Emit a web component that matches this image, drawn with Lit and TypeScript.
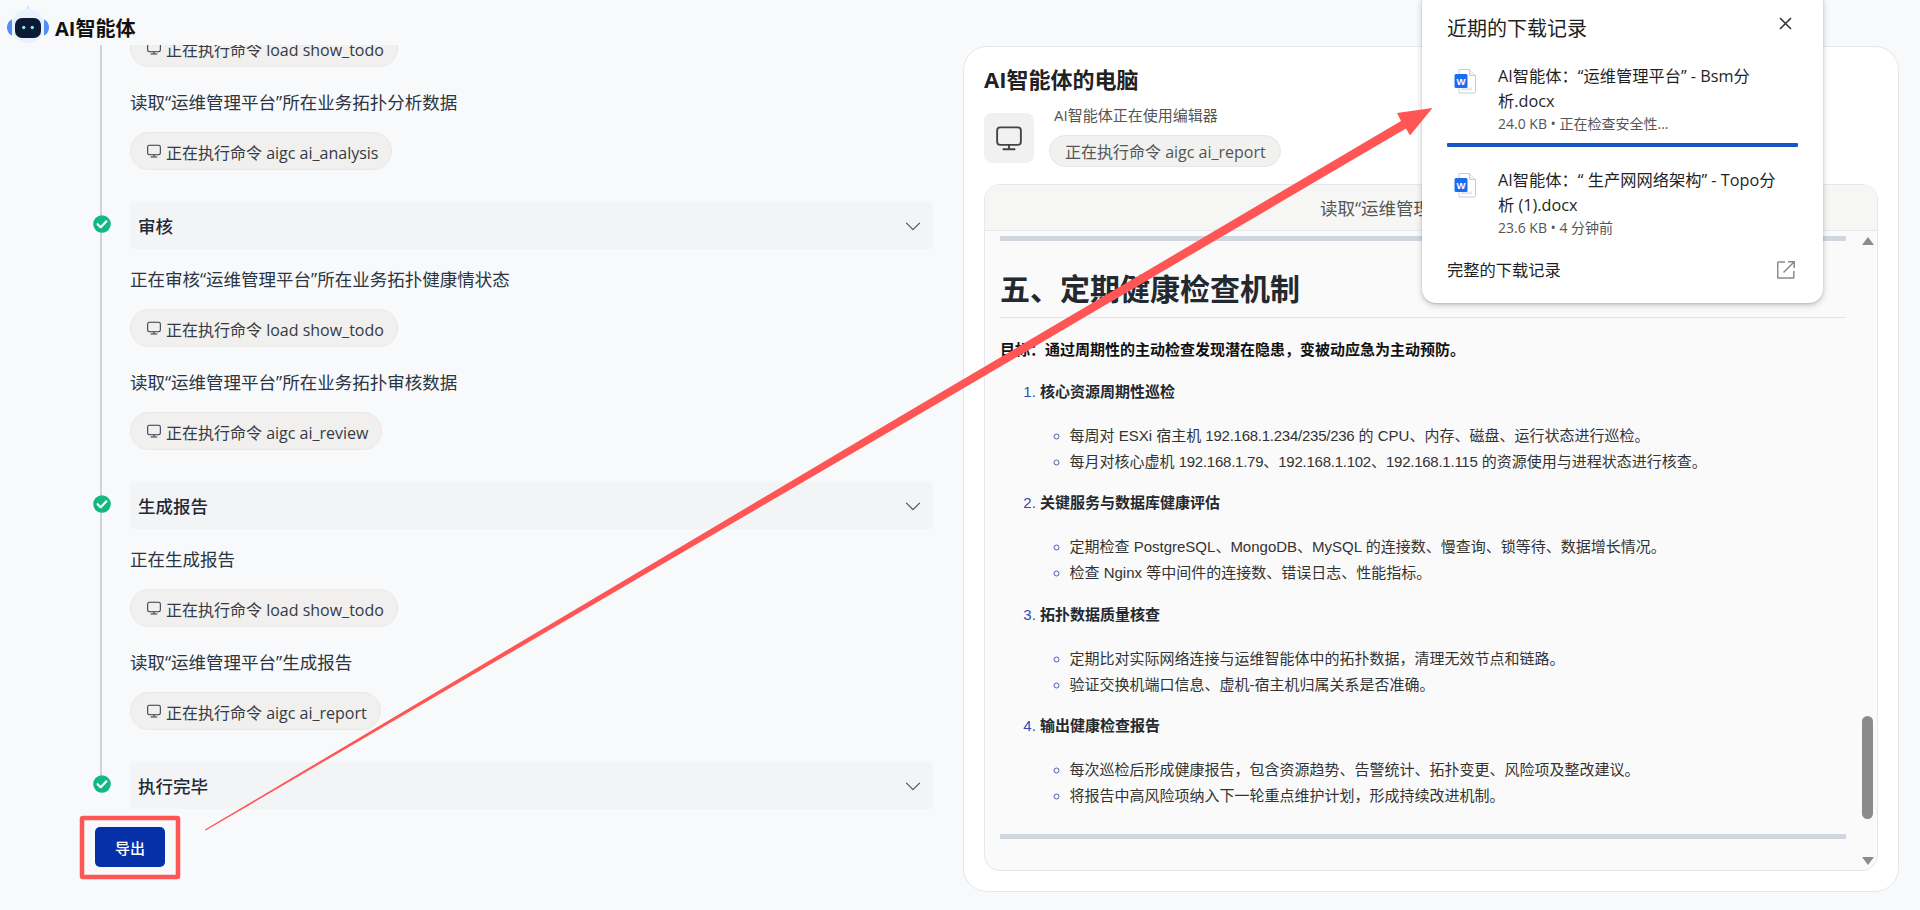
import { LitElement, html, css, svg } from "lit";
import { customElement } from "lit/decorators.js";

const monitor = (size: number, sw: number) => html`<svg class="mon" width=${size} height=${size} viewBox="0 0 24 24" fill="none" stroke="currentColor" stroke-width=${sw} stroke-linecap="round" stroke-linejoin="round"><rect x="2.5" y="3.5" width="19" height="14" rx="2.5"/><path d="M12 17.5V21M7.5 21h9"/></svg>`;
const check = html`<svg class="check" width="18" height="18" viewBox="0 0 18 18"><circle cx="9" cy="9" r="8.8" fill="#10b981"/><path d="M4.6 9.2l3.1 3 5.7-5.9" fill="none" stroke="#fff" stroke-width="2.2" stroke-linecap="round" stroke-linejoin="round"/></svg>`;
const chevron = html`<svg width="16" height="16" viewBox="0 0 16 16" fill="none" stroke="#4b5563" stroke-width="1.2" stroke-linecap="round" stroke-linejoin="round"><path d="M1.5 5.2l6.500 6.500 6.500-6.500"/></svg>`;
const wordIcon = html`<svg class="word" width="22" height="26" viewBox="0 0 22 26"><path d="M5 1.5h10.5l6 6v16.5a1 1 0 0 1-1 1H5z" fill="#fff" stroke="#c9ccd1" stroke-width="1"/><path d="M15.5 1.5v6h6" fill="#f1f2f4" stroke="#c9ccd1" stroke-width="1"/><path d="M7 21h11" stroke="#e3e8f2" stroke-width="3"/><rect x="0.5" y="6" width="13" height="14" rx="1.5" fill="#1a6cf0"/><text x="7" y="16.5" text-anchor="middle" font-size="9.5" font-weight="700" fill="#fff" font-family="Liberation Sans, sans-serif">W</text></svg>`;
const logo = html`<svg class="logo" width="42" height="40" viewBox="0 0 42 40">
  <path d="M21 1v6" stroke="#c7d6f2" stroke-width="1.400"/><circle cx="21" cy="21" r="17" fill="#e9f0fe"/>
  <path d="M5 14.500C2 15.500 0 19 0 22.500S2 29.500 5 30.500z" fill="#4f8ff7"/>
  <path d="M37 14.500C40 15.500 42 19 42 22.500S40 29.500 37 30.500z" fill="#4f8ff7"/>
  <rect x="8" y="13" width="26" height="20" rx="7" fill="#0d1a33"/>
  <circle cx="16.700" cy="22.500" r="1.700" fill="#7de8ea"/><circle cx="25.300" cy="22.500" r="1.700" fill="#7de8ea"/>
</svg>`;

const pill = (t: string) => html`<div class="pill">${monitor(16, 1.6)}<span>${t}</span></div>`;

const steps = [
  { title: "审核", rows: [["正在审核“运维管理平台”所在业务拓扑健康情状态", "正在执行命令 load show_todo"], ["读取“运维管理平台”所在业务拓扑审核数据", "正在执行命令 aigc ai_review"]] },
  { title: "生成报告", rows: [["正在生成报告", "正在执行命令 load show_todo"], ["读取“运维管理平台”生成报告", "正在执行命令 aigc ai_report"]] },
];

const num = (t: string) => html`<span class="num">${t}</span>`;
const sections = [
  { h: "核心资源周期性巡检", items: [html`每周对 ESXi 宿主机 ${num("192.168.1.234/235/236")} 的 CPU、内存、磁盘、运行状态进行巡检。`, html`每月对核心虚机 ${num("192.168.1.79")}、${num("192.168.1.102")}、${num("192.168.1.115")} 的资源使用与进程状态进行核查。`] },
  { h: "关键服务与数据库健康评估", items: [html`定期检查 PostgreSQL、MongoDB、MySQL 的连接数、慢查询、锁等待、数据增长情况。`, html`检查 Nginx 等中间件的连接数、错误日志、性能指标。`] },
  { h: "拓扑数据质量核查", items: [html`定期比对实际网络连接与运维智能体中的拓扑数据，清理无效节点和链路。`, html`验证交换机端口信息、虚机-宿主机归属关系是否准确。`] },
  { h: "输出健康检查报告", items: [html`每次巡检后形成健康报告，包含资源趋势、告警统计、拓扑变更、风险项及整改建议。`, html`将报告中高风险项纳入下一轮重点维护计划，形成持续改进机制。`] },
];

@customElement("app-root")
export class AppRoot extends LitElement {
  static styles = css`
    :host { display: block; width: 1920px; height: 910px; position: relative; overflow: hidden; background: #f8f9fb; color: #1f2937;
      font-family: "Open Sans", "Noto Sans CJK SC", sans-serif; font-size: 16px; }
    * { box-sizing: border-box; }
    .page { display: flex; height: 100%; }
    .left { width: 960px; display: flex; flex-direction: column; }
    .top { height: 45px; flex: none; display: flex; align-items: center; gap: 6px; padding-left: 7px; }
    .logo { flex: none; margin-top: 5px; }
    .brand { font-size: 20px; font-weight: 700; color: #111; margin-top: 9px; }
    .scroll { flex: 1; overflow: hidden; position: relative; }
    .timeline { margin-top: -16px; padding-left: 130px; width: 933px; position: relative; }
    .rail { position: absolute; left: 100px; top: 0; height: 747px; width: 2px; background: #d1d5db; }
    .step { position: relative; margin-bottom: 32px; }
    .step:last-of-type { margin-bottom: 0; }
    .check { position: absolute; left: -37px; top: 13px; }
    .head { height: 47px; background: #f3f4f6; border-radius: 4px; display: flex; align-items: center; justify-content: space-between; padding: 0 12px 0 8px; font-size: 17.500px; font-weight: 500; color: #1f2937; }
    .row-text { line-height: 24px; margin: 18px 0; color: #2b3441; font-size: 17.500px; }
    .row-text.gap { margin-top: 23px; }
    .pill { display: inline-flex; align-items: center; gap: 4px; height: 38px; padding: 0 13px 0 15px; border-radius: 19px; background: #f1f0ee; border: 1px solid #e9e8e5; color: #333b47; vertical-align: top; white-space: nowrap; }
    .pill span { margin-top: 1px; }
    .mon { flex: none; }
    .block { display: flex; flex-direction: column; align-items: flex-start; }
    .export { margin: 18px 0 0 -35px; width: 70px; height: 40px; border: 0; border-radius: 5px; background: #0530a8; color: #fff; font: 500 15px "Open Sans", "Noto Sans CJK SC", sans-serif; display: block; }

    .right { flex: 1; padding: 46px 21px 18px 4px; display: flex; }
    .card { flex: 1; background: #fff; border: 1px solid #e5e7eb; border-radius: 24px; padding: 16px 20px 20px 20px; display: flex; flex-direction: column; }
    .card h2 { margin: 0; font-size: 22px; font-weight: 700; line-height: 32px; color: #222; }
    .using { display: flex; gap: 20px; margin-top: 18px; height: 53px; }
    .ico { width: 50px; height: 50px; border-radius: 8px; background: #f1f1f1; display: flex; align-items: center; justify-content: center; color: #444; flex: none; }
    .using-t { font-size: 15px; color: #555; line-height: 20px; margin-top: -8px; }
    .pill2 { display: inline-flex; align-items: center; height: 32px; margin: 10px 0 0 -5px; padding: 0 14px 0 15px; border-radius: 16px; background: #f1f1f0; border: 1px solid #e7e7e5; color: #555; font-size: 16px; white-space: nowrap; }
    .doc { flex: 1; margin-top: 18px; border: 1px solid #e5e7eb; border-radius: 16px; background: #fafafa; overflow: hidden; display: flex; flex-direction: column; min-height: 0; }
    .doc-head { height: 46px; flex: none; background: #f6f6f4; border-bottom: 1px solid #e5e7eb; display: flex; align-items: center; justify-content: center; color: #555; font-size: 17.500px; }
    .doc-body { flex: 1; display: flex; min-height: 0; }
    .content { width: 877px; padding: 5px 16px 0 15px; flex: none; color: #24292f; font-size: 15px; font-family: "Liberation Sans", "Noto Sans CJK SC", sans-serif; }
    .bar { height: 5px; background: #cfd8e1; }
    .content h1 { margin: 25px 0 0; font-size: 30px; line-height: 47px; height: 52px; font-weight: 700; border-bottom: 1px solid #e1e4e8; color: #24292f; }
    .goal { margin: 18.500px 0 0; line-height: 26px; font-weight: 700; color: #111; }
    ol { margin: 16px 0 0; padding: 0 0 0 40px; }
    ol > li { line-height: 26px; margin-bottom: 15.500px; }
    ol > li::marker { color: #2b4fb0; }
    ol > li > strong { display: block; font-weight: 700; }
    ul { margin: 18px 0 0; padding: 0 0 0 29.500px; list-style: circle; }
    ul li { line-height: 26px; color: #333; }
    ul li::marker { color: #4c63b6; }
    .num { letter-spacing: -0.25px; }
    .content .bar.end { margin-top: 24.500px; }
    .sb { flex: 1; position: relative; display: flex; flex-direction: column; align-items: center; justify-content: space-between; padding: 6px 3px 5px 0; }
    .tri { width: 0; height: 0; border-left: 6px solid transparent; border-right: 6px solid transparent; }
    .tri.up { border-bottom: 8px solid #8b8b8b; }
    .tri.down { border-top: 8px solid #8b8b8b; }
    .thumb { position: absolute; left: 0; top: 485px; width: 11px; height: 103px; border-radius: 5.500px; background: #8b8b8b; }

    .popup { position: absolute; left: 1422px; top: -10px; width: 401px; height: 313px; background: #fff; border-radius: 14px; box-shadow: 0 2px 6px rgba(0,0,0,.22), 0 1px 2px rgba(0,0,0,.12); padding: 25px 25px 0; color: #1f1f1f; z-index: 3; }
    .pop-title { font-size: 20px; line-height: 28px; display: flex; justify-content: space-between; align-items: flex-start; padding-right: 6px; }
    .close { margin: 2px 0 0; }
    .item { display: flex; margin-top: 20.500px; }
    .word { margin: 4px 0 0 7px; flex: none; }
    .it { margin-left: 22px; width: 284px; }
    .it-t { line-height: 25px; font-size: 16.250px; }
    .it-m { font-size: 14px; line-height: 19px; color: #555; }
    .progress { height: 4px; border-radius: 1px; background: #1a55c8; margin-top: 10.500px; width: 351px; }
    .foot { margin-top: 21.500px; line-height: 24px; font-size: 16.250px; display: flex; justify-content: space-between; align-items: center; padding-right: 3px; }
    .ann { position: absolute; left: 0; top: 0; z-index: 5; pointer-events: none; }
  `;

  render() {
    return html`
      <div class="page">
        <div class="left">
          <div class="top">${logo}<span class="brand">AI智能体</span></div>
          <div class="scroll">
            <div class="timeline">
              <div class="rail"></div>
              <div class="step">
                <div class="block">
                  ${pill("正在执行命令 load show_todo")}
                  <div class="row-text gap">读取“运维管理平台”所在业务拓扑分析数据</div>
                  ${pill("正在执行命令 aigc ai_analysis")}
                </div>
              </div>
              ${steps.map((s) => html`
                <div class="step">
                  ${check}
                  <div class="head"><span>${s.title}</span>${chevron}</div>
                  <div class="block">
                    <div class="row-text">${s.rows[0][0]}</div>
                    ${pill(s.rows[0][1])}
                    <div class="row-text gap">${s.rows[1][0]}</div>
                    ${pill(s.rows[1][1])}
                  </div>
                </div>`)}
              <div class="step">
                ${check}
                <div class="head"><span>执行完毕</span>${chevron}</div>
              </div>
              <button class="export">导出</button>
            </div>
          </div>
        </div>
        <div class="right">
          <div class="card">
            <h2>AI智能体的电脑</h2>
            <div class="using">
              <div class="ico">${monitor(30, 1.5)}</div>
              <div>
                <div class="using-t">AI智能体正在使用编辑器</div>
                <div class="pill2">正在执行命令 aigc ai_report</div>
              </div>
            </div>
            <div class="doc">
              <div class="doc-head">读取“运维管理平台”生成报告</div>
              <div class="doc-body">
                <div class="content">
                  <div class="bar"></div>
                  <h1>五、定期健康检查机制</h1>
                  <p class="goal">目标：通过周期性的主动检查发现潜在隐患，变被动应急为主动预防。</p>
                  <ol>
                    ${sections.map((s) => html`<li><strong>${s.h}</strong><ul>${s.items.map((i) => html`<li>${i}</li>`)}</ul></li>`)}
                  </ol>
                  <div class="bar end"></div>
                </div>
                <div class="sb"><div class="tri up"></div><div class="thumb"></div><div class="tri down"></div></div>
              </div>
            </div>
          </div>
        </div>
      </div>

      <div class="popup">
        <div class="pop-title"><span>近期的下载记录</span>
          <svg class="close" width="13" height="13" viewBox="0 0 13 13" stroke="#333" stroke-width="1.600" fill="none"><path d="M1 1l11 11M12 1L1 12"/></svg>
        </div>
        <div class="item">${wordIcon}
          <div class="it"><div class="it-t">AI智能体：“运维管理平台” - Bsm分析.docx</div><div class="it-m">24.0 KB • 正在检查安全性...</div></div>
        </div>
        <div class="progress"></div>
        <div class="item">${wordIcon}
          <div class="it"><div class="it-t">AI智能体：“ 生产网网络架构” - Topo分<br>析 (1).docx</div><div class="it-m">23.6 KB • 4 分钟前</div></div>
        </div>
        <div class="foot"><span>完整的下载记录</span>
          <svg width="18" height="18" viewBox="0 0 18 18" fill="none" stroke="#8a8a8a" stroke-width="1.500"><path d="M8 1H1.500a.8.8 0 0 0-.8.8v14.500a.8.8 0 0 0 .8.8h14.500a.8.8 0 0 0 .8-.8V10M6.500 11.500L17 1M11 .8h6.200V7"/></svg>
        </div>
      </div>

      <svg class="ann" width="1920" height="910" viewBox="0 0 1920 910">
        ${svg`<rect x="82" y="818" width="96" height="59" rx="1" fill="none" stroke="#ff5555" stroke-width="4.500"/>
        <polygon points="205,829.500 900,416.500 1401,121 1397,113 1432.500,108 1410,135.500 1406,128.500 900,425.500 205.700,830.500" fill="#ff5555"/>`}
      </svg>
    `;
  }
}
